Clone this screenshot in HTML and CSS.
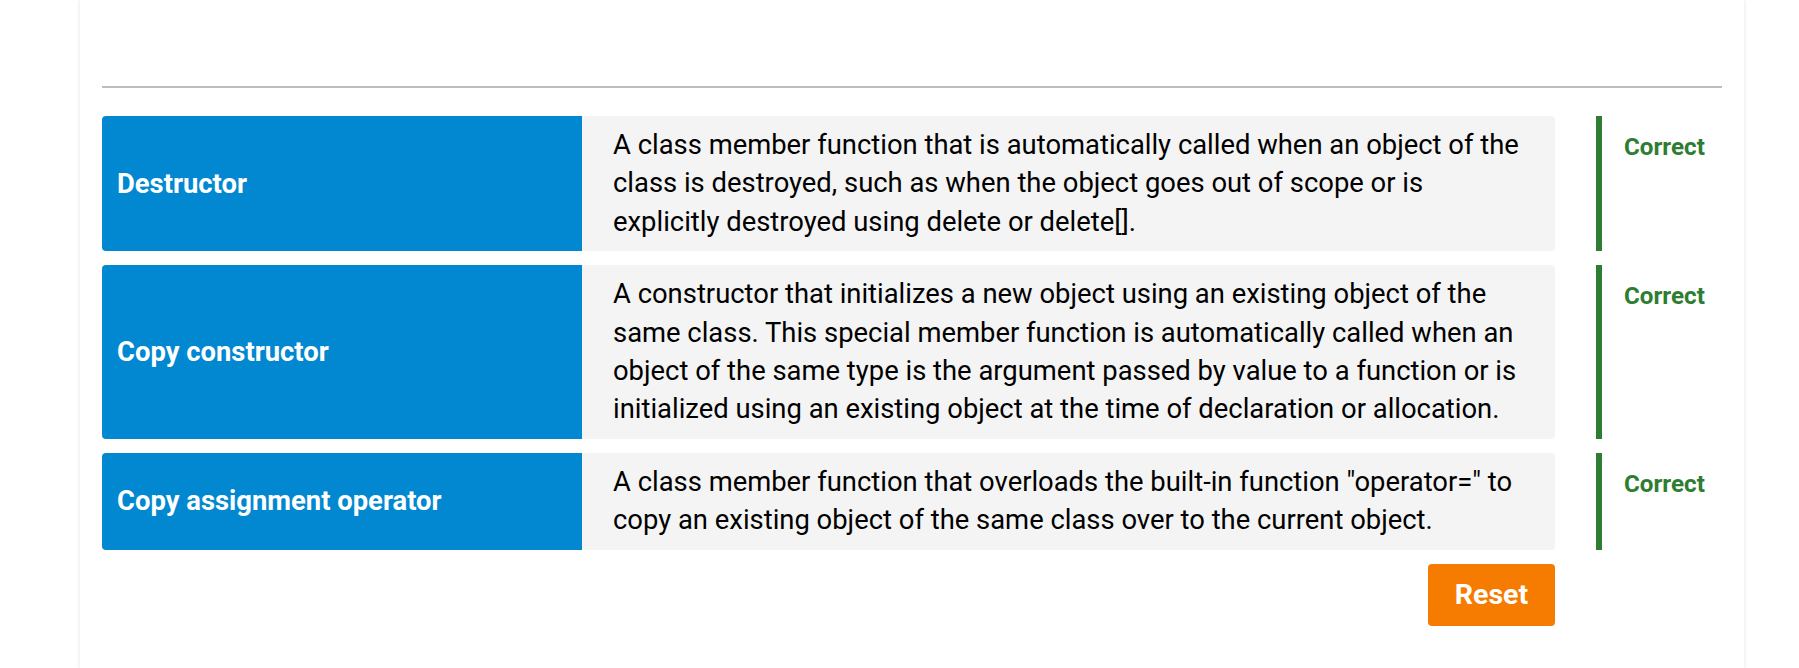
FILE: index.html
```html
<!DOCTYPE html>
<html lang="en">
<head>
<meta charset="utf-8">
<title>Matching</title>
<link rel="stylesheet" href="styles.css">
</head>
<body>
<div class="panel">
  <div class="top-space"></div>
  <hr class="rule">
  <div class="rows">
    <div class="row">
      <div class="term">Destructor</div>
      <div class="definition">A class member function that is automatically called when an object of the class is destroyed, such as when the object goes out of scope or is explicitly destroyed using delete or delete[].</div>
      <div class="result">Correct</div>
    </div>
    <div class="row">
      <div class="term">Copy constructor</div>
      <div class="definition">A constructor that initializes a new object using an existing object of the same class. This special member function is automatically called when an object of the same type is the argument passed by value to a function or is initialized using an existing object at the time of declaration or allocation.</div>
      <div class="result">Correct</div>
    </div>
    <div class="row">
      <div class="term">Copy assignment operator</div>
      <div class="definition">A class member function that overloads the built-in function "operator=" to copy an existing object of the same class over to the current object.</div>
      <div class="result">Correct</div>
    </div>
    <div class="actions">
      <button class="reset">Reset</button>
    </div>
  </div>
</div>
</body>
</html>
```
FILE: styles.css
```css
html, body {
  margin: 0;
  padding: 0;
  background: #ffffff;
}
body {
  font-family: Roboto, "Liberation Sans", sans-serif;
  color: #000;
  overflow: hidden;
}
.panel {
  margin-left: 80px;
  width: 1664px;
  min-height: 668px;
  box-sizing: border-box;
  padding: 0 22px;
  background: #fff;
  box-shadow: 0 0 4px rgba(0,0,0,0.12);
}
.top-space {
  height: 86px;
}
.rule {
  margin: 0;
  border: 0;
  height: 2px;
  background: #bdbdbd;
}
.rows {
  display: flex;
  flex-direction: column;
  gap: 14px;
  padding-top: 28px;
}
.row {
  display: grid;
  grid-template-columns: 480px 973px 41px 126px;
}
.term {
  grid-column: 1;
  background: #0288d1;
  color: #fff;
  font-weight: 700;
  font-size: 27.4px;
  display: flex;
  align-items: center;
  padding: 0 15px;
  border-radius: 4px 0 0 4px;
}
.definition {
  grid-column: 2;
  background: #f4f4f4;
  font-size: 27.4px;
  line-height: 38.4px;
  padding: 10px 30px 10px 31px;
  border-radius: 0 4px 4px 0;
}
.result {
  grid-column: 4;
  border-left: 6px solid #2e7d32;
  color: #2e7d32;
  font-weight: 700;
  font-size: 24.2px;
  line-height: 38.4px;
  padding: 12px 0 0 22px;
}
.actions {
  width: 1453px;
  display: flex;
  justify-content: flex-end;
}
.reset {
  background: #f57c00;
  color: #fff;
  border: 0;
  border-radius: 4px;
  font-family: Roboto, "Liberation Sans", sans-serif;
  font-weight: 700;
  font-size: 28.5px;
  width: 127px;
  height: 62px;
  padding: 0;
}
```
